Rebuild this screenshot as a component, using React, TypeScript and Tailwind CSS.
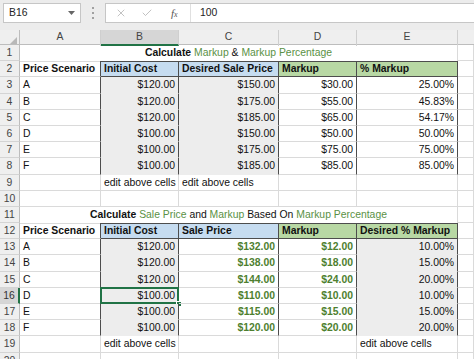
import { ReactNode } from 'react'
import { X, Check } from 'lucide-react'
import { clsx, type ClassValue } from 'clsx'
import { twMerge } from 'tailwind-merge'

const cn = (...c: ClassValue[]) => twMerge(clsx(c))

const GRID = 'grid grid-cols-[20px_81px_78px_100px_78px_101px_16px]'

const markupRows = [
  ['A', '$120.00', '$150.00', '$30.00', '25.00%'],
  ['B', '$120.00', '$175.00', '$55.00', '45.83%'],
  ['C', '$120.00', '$185.00', '$65.00', '54.17%'],
  ['D', '$100.00', '$150.00', '$50.00', '50.00%'],
  ['E', '$100.00', '$175.00', '$75.00', '75.00%'],
  ['F', '$100.00', '$185.00', '$85.00', '85.00%'],
]

const saleRows = [
  ['A', '$120.00', '$132.00', '$12.00', '10.00%'],
  ['B', '$120.00', '$138.00', '$18.00', '15.00%'],
  ['C', '$120.00', '$144.00', '$24.00', '20.00%'],
  ['D', '$100.00', '$110.00', '$10.00', '10.00%'],
  ['E', '$100.00', '$115.00', '$15.00', '15.00%'],
  ['F', '$100.00', '$120.00', '$20.00', '20.00%'],
]

// Single spreadsheet cell with light gridlines on the right and bottom
function Cell({ className, children }: { className?: string; children?: ReactNode }) {
  return (
    <div
      className={cn(
        'relative border-r border-b border-r-[#dadada] border-b-[#dadada] px-[3px] leading-[15px] whitespace-nowrap text-[#111]',
        className
      )}
    >
      {children}
    </div>
  )
}

function RowHead({ n, active }: { n: number; active?: boolean }) {
  return (
    <div
      className={cn(
        'border-r border-b border-r-[#bdbdbd] border-b-[#d4d4d4] bg-[#efefef] text-center leading-[15px] text-[#444]',
        active && 'bg-[#d6d6d6] border-r-2 border-r-[#217346] text-[#333]'
      )}
    >
      {n}
    </div>
  )
}

function Green({ children }: { children: ReactNode }) {
  return <span className="font-normal text-[#5a9145]">{children}</span>
}

const blueHead = 'bg-[#c6dcf0] font-bold border-r-[#4d4d4d] border-b-[#4d4d4d] shadow-[inset_0_1px_0_#4d4d4d]'
const greenHead = 'bg-[#b8d8a4] font-bold border-r-[#4d4d4d] border-b-[#4d4d4d] shadow-[inset_0_1px_0_#4d4d4d]'

export default function App() {
  return (
    <div className="w-[474px] h-[359px] overflow-hidden bg-white font-['Liberation_Sans',Arial,sans-serif] text-[10.4px]">
      {/* Formula bar */}
      <div className="h-[30px] bg-[#ececec] flex items-start pt-[3px] pl-[3px]">
        <div className="w-[78px] h-[20px] bg-white border border-[#c6c6c6] flex items-center justify-between pl-[5px] pr-[5px] text-[#222]">
          <span>B16</span>
          <svg width="7" height="4" viewBox="0 0 7 4">
            <path d="M0 0h7L3.5 4z" fill="#666" />
          </svg>
        </div>
        <div className="w-[24px] h-[20px] flex flex-col items-center justify-center gap-[3px]">
          <span className="w-[2px] h-[2px] bg-[#a0a0a0]" />
          <span className="w-[2px] h-[2px] bg-[#a0a0a0]" />
          <span className="w-[2px] h-[2px] bg-[#a0a0a0]" />
        </div>
        <div className="flex-1 h-[20px] bg-white border border-r-0 border-[#c6c6c6] flex items-center">
          <div className="w-[85px] h-full flex items-center border-r border-[#e0e0e0]">
            <X size={12} strokeWidth={1.4} className="ml-[9px] text-[#a8a8a8]" />
            <Check size={12} strokeWidth={1.4} className="ml-[14px] text-[#a8a8a8]" />
            <span className="ml-[18px] italic font-['Liberation_Serif',serif] text-[11px] text-[#555]">
              f<span className="text-[8px]">x</span>
            </span>
          </div>
          <span className="pl-[9px] text-[#222]">100</span>
        </div>
      </div>

      {/* Column headers */}
      <div className={cn(GRID, 'h-[15px] bg-[#efefef] border-b border-[#bdbdbd] text-[#444] leading-[14px]')}>
        <div className="relative border-r border-[#bdbdbd]">
          <svg width="7" height="7" viewBox="0 0 7 7" className="absolute right-[2px] bottom-[2px]">
            <path d="M7 0v7H0z" fill="#b8b8b8" />
          </svg>
        </div>
        <div className="text-center border-r border-[#cfcfcf]">A</div>
        <div className="text-center border-r border-[#cfcfcf] bg-[#d6d6d6] border-b-2 border-b-[#217346]">B</div>
        <div className="text-center border-r border-[#cfcfcf]">C</div>
        <div className="text-center border-r border-[#cfcfcf]">D</div>
        <div className="text-center border-r border-[#cfcfcf]">E</div>
        <div />
      </div>

      {/* Sheet */}
      <div className={cn(GRID, 'auto-rows-[16.2px]')}>
        {/* Row 1 */}
        <RowHead n={1} />
        <Cell className="col-span-5 text-center font-bold border-b-0">
          Calculate <Green>Markup</Green> <span className="font-normal">&amp;</span> <Green>Markup Percentage</Green>
        </Cell>
        <Cell />

        {/* Row 2 */}
        <RowHead n={2} />
        <Cell className="font-bold border-r-[#4d4d4d] shadow-[inset_0_1px_0_#dadada]">Price Scenario</Cell>
        <Cell className={blueHead}>Initial Cost</Cell>
        <Cell className={blueHead}>Desired Sale Price</Cell>
        <Cell className={greenHead}>Markup</Cell>
        <Cell className={greenHead}>% Markup</Cell>
        <Cell />

        {markupRows.map((r, i) => (
          <Row key={r[0]} n={i + 3} r={r} variant="markup" />
        ))}

        {/* Row 9 */}
        <RowHead n={9} />
        <Cell />
        <Cell>edit above cells</Cell>
        <Cell>edit above cells</Cell>
        <Cell />
        <Cell />
        <Cell />

        {/* Row 10 */}
        <RowHead n={10} />
        <Cell />
        <Cell />
        <Cell />
        <Cell />
        <Cell />
        <Cell />

        {/* Row 11 */}
        <RowHead n={11} />
        <Cell className="col-span-5 text-center font-bold border-b-0">
          Calculate <Green>Sale Price</Green> <span className="font-normal">and</span> <Green>Markup</Green>{' '}
          <span className="font-normal">Based On</span> <Green>Markup Percentage</Green>
        </Cell>
        <Cell />

        {/* Row 12 */}
        <RowHead n={12} />
        <Cell className="font-bold border-r-[#4d4d4d] shadow-[inset_0_1px_0_#dadada]">Price Scenario</Cell>
        <Cell className={blueHead}>Initial Cost</Cell>
        <Cell className={blueHead}>Sale Price</Cell>
        <Cell className={greenHead}>Markup</Cell>
        <Cell className={greenHead}>Desired % Markup</Cell>
        <Cell />

        {saleRows.map((r, i) => (
          <Row key={r[0]} n={i + 13} r={r} variant="sale" selected={i === 3} />
        ))}

        {/* Row 19 */}
        <RowHead n={19} />
        <Cell />
        <Cell>edit above cells</Cell>
        <Cell />
        <Cell />
        <Cell>edit above cells</Cell>
        <Cell />

        {/* Row 20 */}
        <RowHead n={20} />
        <Cell />
        <Cell />
        <Cell />
        <Cell />
        <Cell />
        <Cell />
      </div>
    </div>
  )
}

function Row({
  n,
  r,
  variant,
  selected,
}: {
  n: number
  r: string[]
  variant: 'markup' | 'sale'
  selected?: boolean
}) {
  const gray = 'bg-[#ededed] border-b-[#ededed]'
  const sale = variant === 'sale'
  return (
    <>
      <RowHead n={n} active={selected} />
      <Cell className="border-r-[#4d4d4d]">{r[0]}</Cell>
      <Cell className={cn('text-right border-r-[#4d4d4d]', gray)}>
        {r[1]}
        {selected && (
          <>
            <span className="absolute -left-[1px] -top-[1px] -right-[1px] -bottom-[1px] border-2 border-[#217346]" />
            <span className="absolute -right-[4px] -bottom-[4px] w-[6px] h-[6px] bg-[#217346] border border-white" />
          </>
        )}
      </Cell>
      <Cell className={cn('text-right border-r-[#4d4d4d]', sale ? 'font-bold text-[#4e7f2f]' : gray)}>{r[2]}</Cell>
      <Cell className={cn('text-right border-r-[#4d4d4d]', sale && 'font-bold text-[#4e7f2f]')}>{r[3]}</Cell>
      <Cell className={cn('text-right border-r-[#4d4d4d]', sale && gray)}>{r[4]}</Cell>
      <Cell />
    </>
  )
}
